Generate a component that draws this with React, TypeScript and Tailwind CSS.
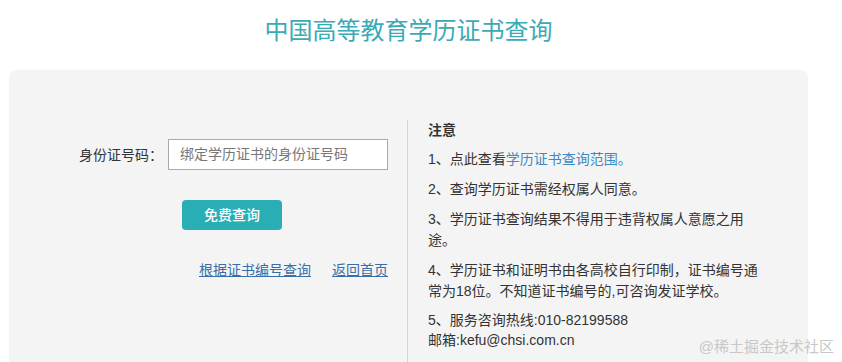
const notes = [
  { id: 2, text: "2、查询学历证书需经权属人同意。" },
  { id: 3, text: "3、学历证书查询结果不得用于违背权属人意愿之用途。" },
  { id: 4, text: "4、学历证书和证明书由各高校自行印制，证书编号通常为18位。不知道证书编号的,可咨询发证学校。" },
];

export default function App() {
  return (
    <div className="relative h-[362px] w-[842px] overflow-hidden bg-white font-['Liberation_Sans','Noto_Sans_CJK_SC',sans-serif] text-[14px] text-[#333]">
      <h1 className="pt-[15px] pl-[9px] w-[808px] text-center text-[24px] leading-[32px] text-[#3aaab4]">
        中国高等教育学历证书查询
      </h1>

      <div className="ml-[9px] mt-[23px] h-[320px] w-[799px] rounded-[8px] bg-[#f4f4f4] pt-[50px]">
        <div className="flex h-full">
          {/* left: form */}
          <div className="w-[398px] pt-[19px]">
            <div className="flex items-center pl-[70px]">
              <span className="leading-[20px]">身份证号码：</span>
              <div className="ml-[5px] flex h-[31px] w-[220px] items-center border border-[#aaa] bg-white pl-[11px] text-[#777]">
                绑定学历证书的身份证号码
              </div>
            </div>
            <button className="ml-[173px] mt-[30px] h-[30px] w-[100px] rounded-[4px] bg-[#2aaeb5] text-[14px] font-medium text-white">
              免费查询
            </button>
            <div className="ml-[190px] mt-[30px] flex gap-[21px] leading-[20px] text-[#3a6ea8] underline">
              <a href="#">根据证书编号查询</a>
              <a href="#">返回首页</a>
            </div>
          </div>

          {/* right: notes */}
          <div className="h-full border-l border-[#d4d4d4] pl-[20px]">
            <div className="w-[332px] leading-[21px]">
              <p className="font-bold">注意</p>
              <p className="mt-[8px]">
                1、点此查看<span className="text-[#3a8ac4]">学历证书查询范围。</span>
              </p>
              {notes.map((n) => (
                <p key={n.id} className="mt-[9px]">
                  {n.text}
                </p>
              ))}
              <p className="mt-[8px] leading-[20px]">
                5、服务咨询热线:010-82199588
                <br />
                邮箱:kefu@chsi.com.cn
              </p>
            </div>
          </div>
        </div>
      </div>

      <span className="absolute bottom-[4px] right-[8px] text-[15px] text-[#c8c8c8]">@稀土掘金技术社区</span>
    </div>
  );
}
